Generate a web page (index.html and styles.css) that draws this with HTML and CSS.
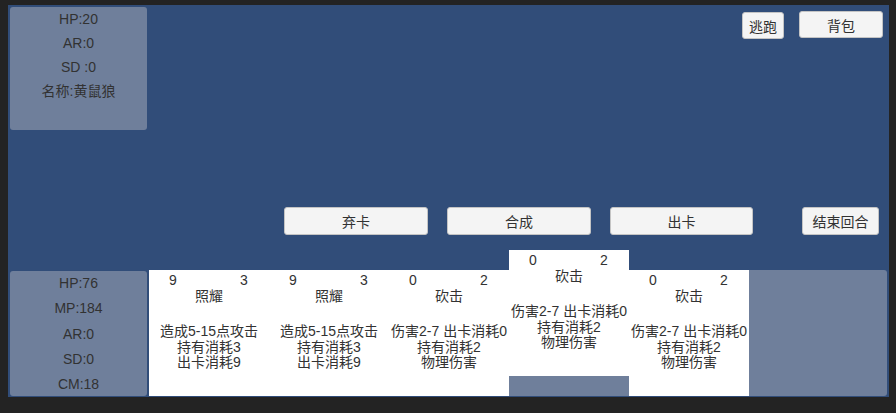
FILE: index.html
```html
<!DOCTYPE html>
<html lang="zh">
<head>
    <meta charset="UTF-8">
    <meta name="viewport" content="width=device-width, initial-scale=1.0">
    <title>战斗</title>
    <link rel="stylesheet" href="styles.css">
</head>
<body>
    <div class="game">
        <div class="top">
            <div class="panel enemy">
                <div>HP:20</div>
                <div>AR:0</div>
                <div>SD :0</div>
                <div>名称:黄鼠狼</div>
            </div>
            <div class="top-btns">
                <button class="btn btn-flee">逃跑</button>
                <button class="btn btn-bag">背包</button>
            </div>
        </div>

        <div class="actions">
            <button class="btn btn-wide">弃卡</button>
            <button class="btn btn-wide">合成</button>
            <button class="btn btn-wide btn-play">出卡</button>
            <button class="btn btn-end">结束回合</button>
        </div>

        <div class="bottom">
            <div class="panel player">
                <div>HP:76</div>
                <div>MP:184</div>
                <div>AR:0</div>
                <div>SD:0</div>
                <div>CM:18</div>
            </div>
            <div class="hand">
                <div class="card">
                    <div class="card-nums"><span>9</span><span>3</span></div>
                    <div class="card-title">照耀</div>
                    <div class="card-desc">
                        <div>造成5-15点攻击</div>
                        <div>持有消耗3</div>
                        <div>出卡消耗9</div>
                    </div>
                </div>
                <div class="card">
                    <div class="card-nums"><span>9</span><span>3</span></div>
                    <div class="card-title">照耀</div>
                    <div class="card-desc">
                        <div>造成5-15点攻击</div>
                        <div>持有消耗3</div>
                        <div>出卡消耗9</div>
                    </div>
                </div>
                <div class="card">
                    <div class="card-nums"><span>0</span><span>2</span></div>
                    <div class="card-title">砍击</div>
                    <div class="card-desc">
                        <div>伤害2-7 出卡消耗0</div>
                        <div>持有消耗2</div>
                        <div>物理伤害</div>
                    </div>
                </div>
                <div class="card raised">
                    <div class="card-nums"><span>0</span><span>2</span></div>
                    <div class="card-title">砍击</div>
                    <div class="card-desc">
                        <div>伤害2-7 出卡消耗0</div>
                        <div>持有消耗2</div>
                        <div>物理伤害</div>
                    </div>
                </div>
                <div class="card">
                    <div class="card-nums"><span>0</span><span>2</span></div>
                    <div class="card-title">砍击</div>
                    <div class="card-desc">
                        <div>伤害2-7 出卡消耗0</div>
                        <div>持有消耗2</div>
                        <div>物理伤害</div>
                    </div>
                </div>
            </div>
        </div>
    </div>
</body>
</html>
```

FILE: styles.css
```css
body {
    margin: 0;
    padding: 5px 7px 16px 8px;
    background-color: #232323;
    font-family: "Liberation Sans", "Noto Sans CJK SC", sans-serif;
    font-size: 14px;
    color: #323232;
}

.game {
    display: flex;
    flex-direction: column;
    height: 392px;
    box-sizing: border-box;
    padding: 2px 2px 1px 2px;
    background-color: #314d79;
}

/* 灰色面板 */
.panel {
    background-color: #6f7f9b;
    border-radius: 3px;
    text-align: center;
}

.top {
    display: flex;
    justify-content: space-between;
    height: 123px;
}

.enemy {
    width: 137px;
    line-height: 24px;
}

.top-btns {
    display: flex;
    align-items: flex-start;
    gap: 15px;
    margin: 4px 4px 0 0;
}

.btn {
    font-family: inherit;
    font-size: 14px;
    color: #323232;
    background-color: #f4f4f4;
    border: 1px solid #c4c4c4;
    border-radius: 3px;
    padding: 0;
    height: 27px;
}

.btn-flee {
    width: 42px;
    margin-top: 1px;
}

.btn-bag {
    width: 84px;
}

.actions {
    display: flex;
    margin-top: 77px;
    padding-left: 274px;
    gap: 19px;
}

.actions .btn {
    height: 28px;
}

.btn-wide {
    width: 144px;
}

.btn-play {
    width: 143px;
}

.btn-end {
    width: 77px;
    margin-left: 30px;
}

.bottom {
    display: flex;
    gap: 2px;
    margin-top: 35px;
    height: 126px;
}

.player {
    width: 137px;
    margin-top: 1px;
    line-height: 25.3px;
}

.hand {
    flex: 1;
    display: flex;
    background-color: #6f7f9b;
    border-radius: 3px;
}

.card {
    width: 120px;
    background-color: #fff;
    text-align: center;
}

.card.raised {
    transform: translateY(-20px);
}

.card-nums {
    display: flex;
    justify-content: space-between;
    padding: 0 20px 0 19px;
    line-height: 20px;
}

.card-nums span {
    width: 10px;
}

.card-title {
    line-height: 12px;
}

.card-desc {
    margin-top: 22px;
    line-height: 15.5px;
    white-space: nowrap;
}
```
